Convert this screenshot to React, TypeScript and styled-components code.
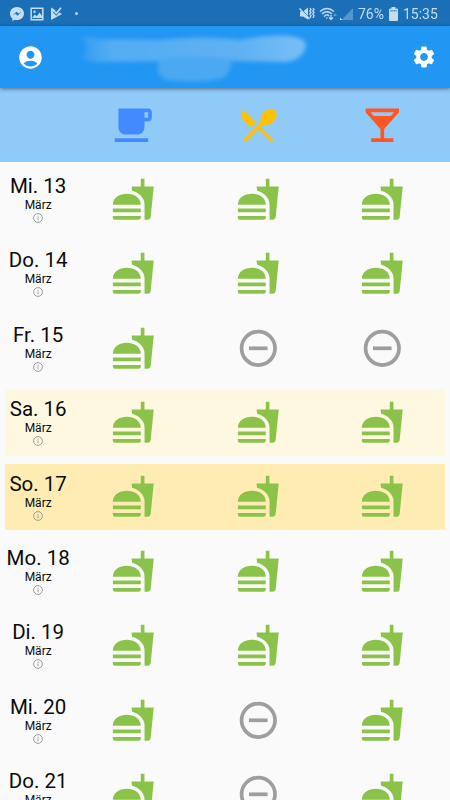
import React from 'react';
import styled, { createGlobalStyle } from 'styled-components';
import {
  MdAccountCircle,
  MdSettings,
  MdRestaurantMenu,
} from 'react-icons/md';

const GlobalStyle = createGlobalStyle`
  * { box-sizing: border-box; }
  html, body { margin: 0; padding: 0; overflow: hidden; }
  body { background: #fafafa; font-family: Roboto, "Liberation Sans", sans-serif; }
  svg { display: block; flex: none; }
`;

const Screen = styled.div`
  width: 450px;
  height: 800px;
  display: flex;
  flex-direction: column;
  overflow: hidden;
  background: #fafafa;
`;

const StatusBar = styled.div`
  height: 26px;
  flex: none;
  display: flex;
  align-items: center;
  justify-content: space-between;
  padding: 1px 7px 0 10px;
  background: #1a6fb6;
  color: #c6ddf0;
`;

const Notifications = styled.div`
  display: flex;
  align-items: center;
  gap: 6px;
`;

const Dot = styled.span`
  width: 3px;
  height: 3px;
  margin-left: 6px;
  border-radius: 50%;
  background: #b5d2ea;
`;

const SystemInfo = styled.div`
  display: flex;
  align-items: center;
`;

const StatusText = styled.span<{ $width: number }>`
  width: ${(p) => p.$width}px;
  font-size: 15.5px;
  line-height: 18px;
  white-space: nowrap;
  transform: scaleX(0.9);
  transform-origin: left center;
`;

const AppBar = styled.header`
  position: relative;
  z-index: 1;
  height: 62px;
  flex: none;
  display: grid;
  grid-template-columns: 53px 1fr 26px;
  align-items: center;
  padding: 0 13.5px 0 17px;
  background: #2196f3;
  color: #fff;
  box-shadow: 0 1px 4px rgba(0, 0, 0, 0.45);
`;

const MealHeader = styled.div`
  height: 73.7px;
  flex: none;
  display: grid;
  grid-template-columns: repeat(3, 124.5px);
  align-items: center;
  justify-items: center;
  padding: 0 5px 0 71.3px;
  background: #90caf9;
`;

const HeaderCell = styled.div<{ $color: string }>`
  color: ${(p) => p.$color};
`;

const DayList = styled.main`
  display: flex;
  flex-direction: column;
  gap: 8.2px;
  padding: 4.5px 5px 0;
`;

const DayRow = styled.div<{ $tint: string }>`
  height: 66.2px;
  flex: none;
  display: grid;
  grid-template-columns: 66.3px repeat(3, 124.5px);
  align-items: center;
  justify-items: center;
  width: 439.8px;
  background: ${(p) => p.$tint};
`;

const DateCell = styled.div`
  display: flex;
  flex-direction: column;
  align-items: center;
  padding-bottom: 1.4px;
  color: #0a0a0a;
`;

const DayName = styled.span`
  font-size: 20.5px;
  line-height: 25px;
  white-space: nowrap;
`;

const Month = styled.span`
  font-size: 12px;
  line-height: 13.5px;
  margin-bottom: 0.5px;
`;

const TitleSmudge = () => (
  <svg width="250" height="60" viewBox="0 0 250 60" aria-hidden="true">
    <defs>
      <filter id="soft" x="-10%" y="-30%" width="120%" height="160%">
        <feGaussianBlur stdDeviation="2.2" />
      </filter>
      <linearGradient id="fade" x1="0" x2="1" y1="0" y2="0">
        <stop offset="0" stopColor="#2f9cf4" />
        <stop offset="0.14" stopColor="#55adf2" />
        <stop offset="0.7" stopColor="#5eb1f2" />
        <stop offset="1" stopColor="#78c0f5" />
      </linearGradient>
    </defs>
    <g filter="url(#soft)">
      <path d="M10 9Q20 9 28 12L90 13Q135 8 170 13Q195 7 220 9Q240 12 235 22Q230 34 215 35L165 34L95 34L25 35Q16 34 12 31Q22 22 10 9Z" fill="url(#fade)" />
      <path d="M90 33Q120 27 161 33Q162 48 150 52Q125 57 96 53Q83 46 90 33Z" fill="#4ca9f1" />
    </g>
  </svg>
);

const MessengerIcon = () => (
  <svg width="14" height="14" viewBox="0 0 24 24">
    <path
      fill="currentColor"
      fillRule="evenodd"
      d="M12 0C5.2 0 0 4.8 0 11.2c0 3.5 1.6 6.5 4 8.5V24l4-2.1c1.3.4 2.6.5 4 .5 6.8 0 12-4.8 12-11.2S18.8 0 12 0zM4.6 15l6.5-7 3.4 3.3L19.5 8l-6.5 7-3.4-3.3z"
    />
  </svg>
);

const PictureIcon = () => (
  <svg width="14" height="14" viewBox="0 0 14 14">
    <path d="M1.2 1.2H12.8V12.8H1.2Z" fill="none" stroke="currentColor" strokeWidth="1.5" />
    <circle cx="4.5" cy="4.7" r="1.2" fill="currentColor" />
    <path d="M2 11L4.8 7.5L6.8 9.2L9.6 5.5L12 9V11Z" fill="currentColor" />
  </svg>
);

const PlayIcon = () => (
  <svg width="13" height="13" viewBox="0 0 13 13">
    <path d="M1 0.5L12 7L1 13Z" fill="currentColor" />
    <path d="M4 4L6.3 6.3L11 0.8" fill="none" stroke="#1a6fb6" strokeWidth="3.4" />
    <path d="M3.5 3.5L6.3 6.3L11 0.8" fill="none" stroke="currentColor" strokeWidth="1.7" />
  </svg>
);

const SignalIcons = () => (
  <svg width="59" height="16" viewBox="0 0 59 16" fill="none" stroke="currentColor">
    <path d="M1 5.5H4L9 1.5V13.5L4 10.5H1Z" fill="currentColor" stroke="none" />
    <path d="M1 1.5L11 12.5" stroke="#1a6fb6" strokeWidth="1" />
    <path d="M0.5 2.5L10.5 13" strokeWidth="1.3" />
    <path d="M11 2L12 3.5L10.8 5L12 6.5L10.8 8L12 9.5L11 12M14 2L15 3.5L13.8 5L15 6.5L13.8 8L15 9.5L14 12" strokeWidth="1.3" />
    <g strokeWidth="1.5">
      <path d="M21 5.5Q28 -0.5 35 5.5" />
      <path d="M23 8Q28 3.5 33 8" />
      <path d="M25 10.5Q28 7.5 30 10" />
    </g>
    <path d="M26.5 11.5H29L28 13Z" fill="currentColor" stroke="none" />
    <path d="M32 9V13.5M30 11.5L32 13.5L34 11.5" strokeWidth="1.2" />
    <path d="M36 7L38 10H34Z" fill="#5796ca" stroke="none" />
    <path d="M43 13.5L54 2V14H43Z" fill="#5796ca" stroke="none" />
    <path d="M41 11.5V14H43.5Z" fill="currentColor" stroke="none" />
  </svg>
);

const BatteryIcon = styled.svg`
  margin-right: 5px;
`;

const Battery = () => (
  <BatteryIcon width="9" height="14" viewBox="0 0 9 14">
    <path d="M2.5 0H6.5V1.5H8Q9 1.5 9 2.5V13Q9 14 8 14H1Q0 14 0 13V2.5Q0 1.5 1 1.5H2.5Z" fill="currentColor" />
    <path d="M1 3H8V4.5H1Z" fill="#6ea5d3" />
  </BatteryIcon>
);

const ICON_SIZE = 44.6;

const CafeIcon = () => (
  <svg width={ICON_SIZE} height={ICON_SIZE} viewBox="0 0 24 24" fill="currentColor">
    <path d="M20 3H4v10c0 2.21 1.79 4 4 4h6c2.21 0 4-1.79 4-4v-3h2c1.11 0 2-.89 2-2V5c0-1.11-.89-2-2-2zm0 5h-2V5h2v3zM2 21h18v-2H2v2z" />
  </svg>
);

const BarIcon = () => (
  <svg width={ICON_SIZE} height={ICON_SIZE} viewBox="0 0 24 24" fill="currentColor">
    <path d="M21 5V3H3v2l8 9v5H6v2h12v-2h-5v-5l8-9zM7.43 7L5.66 5h12.69l-1.78 2H7.43z" />
  </svg>
);

const MealIcon = () => (
  <svg width={ICON_SIZE} height={ICON_SIZE} viewBox="0 0 24 24" fill="#8bc34a">
    <path d="M18.06 22.99h1.66c.84 0 1.53-.64 1.63-1.46L23 5.05h-5V1h-1.97v4.05h-4.97l.3 2.34c1.71.47 3.31 1.32 4.27 2.26 1.44 1.42 2.43 2.89 2.43 5.29v8.05zM1 21.99V21h15.03v.99c0 .55-.45 1-1.01 1H2.01c-.56 0-1.01-.45-1.01-1zm15.03-7c0-8-15.03-8-15.03 0h15.03zM1.02 17h15v2h-15v-2z" />
  </svg>
);

const SkippedIcon = () => (
  <svg width={ICON_SIZE} height={ICON_SIZE} viewBox="0 0 24 24" fill="none" stroke="#9e9e9e" strokeWidth="2">
    <circle cx="12" cy="12" r="9" />
    <path d="M7 12H17" />
  </svg>
);

const InfoIcon = () => (
  <svg width="10" height="10" viewBox="0 0 24 24" fill="none" stroke="#8a8a8a" strokeWidth="2">
    <circle cx="12" cy="12" r="10.5" />
    <path d="M12 10.5V17.5M12 6.5V9" />
  </svg>
);

interface Day {
  name: string;
  meals: [boolean, boolean, boolean];
  tint?: string;
}

const days: Day[] = [
  { name: 'Mi. 13', meals: [true, true, true] },
  { name: 'Do. 14', meals: [true, true, true] },
  { name: 'Fr. 15', meals: [true, false, false] },
  { name: 'Sa. 16', meals: [true, true, true], tint: '#fff8e1' },
  { name: 'So. 17', meals: [true, true, true], tint: '#ffecb3' },
  { name: 'Mo. 18', meals: [true, true, true] },
  { name: 'Di. 19', meals: [true, true, true] },
  { name: 'Mi. 20', meals: [true, false, true] },
  { name: 'Do. 21', meals: [true, false, true] },
];

export default function App() {
  return (
    <>
      <GlobalStyle />
      <Screen>
        <StatusBar>
          <Notifications>
            <MessengerIcon />
            <PictureIcon />
            <PlayIcon />
            <Dot />
          </Notifications>
          <SystemInfo>
            <SignalIcons />
            <StatusText $width={31}>76%</StatusText>
            <Battery />
            <StatusText $width={40}>15:35</StatusText>
          </SystemInfo>
        </StatusBar>
        <AppBar>
          <MdAccountCircle size={27} />
          <TitleSmudge />
          <MdSettings size={26} />
        </AppBar>
        <MealHeader>
          <HeaderCell $color="#448aff"><CafeIcon /></HeaderCell>
          <HeaderCell $color="#ffc107"><MdRestaurantMenu size={ICON_SIZE} /></HeaderCell>
          <HeaderCell $color="#ff5722"><BarIcon /></HeaderCell>
        </MealHeader>
        <DayList>
          {days.map((day) => (
            <DayRow key={day.name} $tint={day.tint ?? 'transparent'}>
              <DateCell>
                <DayName>{day.name}</DayName>
                <Month>März</Month>
                <InfoIcon />
              </DateCell>
              {day.meals.map((booked, i) => (booked ? <MealIcon key={i} /> : <SkippedIcon key={i} />))}
            </DayRow>
          ))}
        </DayList>
      </Screen>
    </>
  );
}
